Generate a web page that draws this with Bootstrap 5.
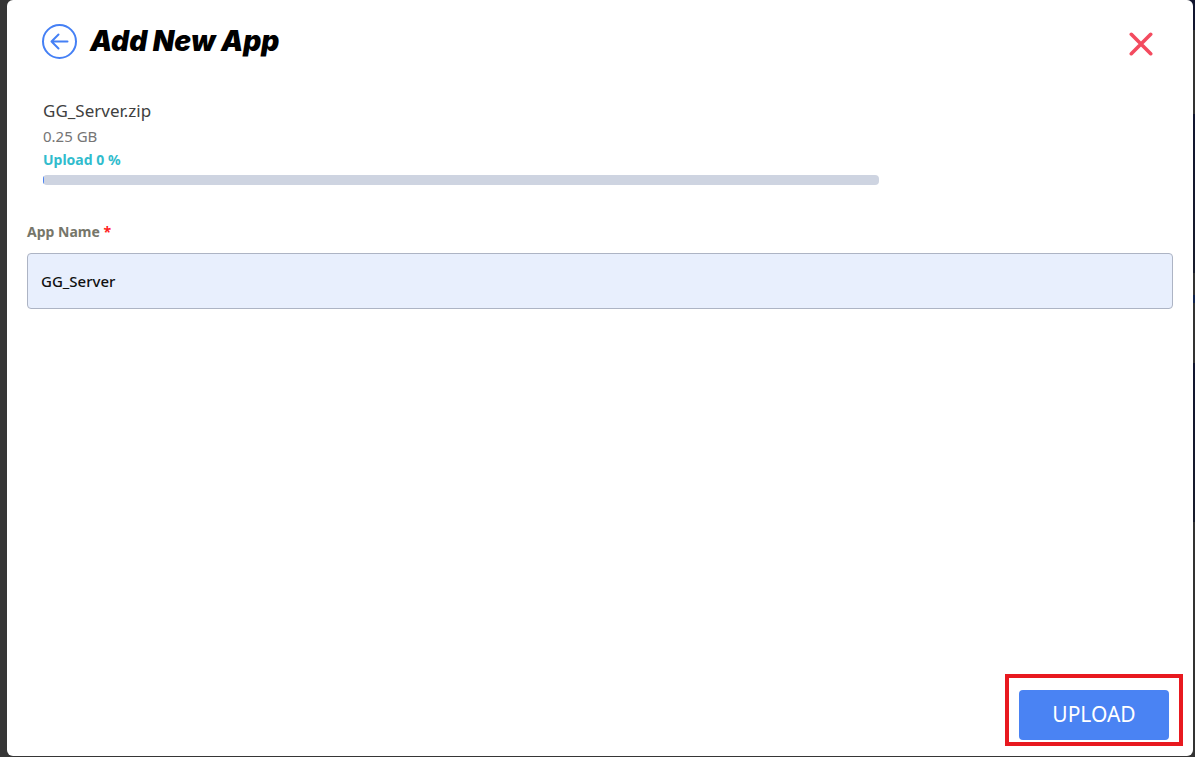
<!DOCTYPE html>
<html lang="en">
<head>
<meta charset="utf-8">
<meta name="viewport" content="width=device-width, initial-scale=1">
<title>Add New App</title>
<link rel="stylesheet" href="https://cdn.jsdelivr.net/npm/bootstrap@5.3.0/dist/css/bootstrap.min.css">
<style>
body { background: #363636; font-family: "Noto Sans", sans-serif; }
.page-shell {
  padding: 0 2px 1px 7px;
  background: linear-gradient(#11152f 4%, #333 4%, #333 15%, #11152f 15%, #171b2b 36%, #333 36%, #333 39%, #10234d 39%, #10234d 40%, #333 40%, #333 48%, #11152f 48%, #171b2b 69%, #333 69%) right / 6px 100% no-repeat;
}
.app-dialog { background: #fff; border-radius: 6px; }
.dialog-head { padding: 23px 40px 0 35px; }
.back-btn, .close-btn { line-height: 0; }
.close-btn { padding: 5px 0 0; }
.dialog-title { font: italic 900 28px/36px Inter, sans-serif; color: #000; margin-left: 13px; }
.upload-info { padding: 0 16px; margin: 39px 0 36px; }
.file-name { font-size: 17px; line-height: 26px; color: #404040; }
.file-size { font-size: 15px; line-height: 24px; color: #757575; }
.file-status { font-size: 14px; line-height: 24px; color: #31bccd; }
.upload-bar { height: 10px; border-radius: 4px; background: #ced4e1; width: 75%; margin-top: 3px; }
.upload-bar .progress-bar { background: #4a83f3; }
.name-label { font-size: 14px; line-height: 22px; color: #76766a; margin-bottom: 10px; }
.required-mark { color: #f22; }
.name-input { height: 56px; padding: 0 13px; font-size: 15px; font-weight: 500; color: #111; background: #e8effd; border-color: #adb4c4; border-radius: 4px; }
.upload-frame { border: 4px solid #e8191f; padding: 12px 10px 2px; margin: 0 10px 10px 0; }
.upload-btn { width: 150px; height: 50px; padding: 0; font-size: 21px; color: #fff; background: #4a83f3; border: 0; border-radius: 4px; }
</style>
</head>
<body>
<div class="page-shell d-flex min-vh-100">
  <main class="app-dialog flex-grow-1 d-flex flex-column">
    <header class="dialog-head d-flex align-items-center">
      <button type="button" class="btn back-btn border-0 p-0" aria-label="Back">
        <svg width="35" height="35" viewBox="0 0 35 35" fill="none" stroke="#4580f5" stroke-width="2" stroke-linecap="round" stroke-linejoin="round"><circle cx="17.5" cy="17.5" r="16.5"/><path d="M25.5 17.5H9.5M16.5 10.5l-7 7 7 7"/></svg>
      </button>
      <h1 class="dialog-title mb-0">Add New App</h1>
      <button type="button" class="btn close-btn border-0 ms-auto" aria-label="Close">
        <svg width="24" height="24" viewBox="0 0 24 24" fill="none" stroke="#f34b5f" stroke-width="3.6" stroke-linecap="round"><path d="M2.3 2.3l19.4 19.4M21.7 2.3L2.3 21.7"/></svg>
      </button>
    </header>
    <form class="flex-grow-1 d-flex flex-column">
      <div class="px-3 mx-1">
        <section class="upload-info">
          <div class="file-name">GG_Server.zip</div>
          <div class="file-size">0.25 GB</div>
          <div class="file-status"><strong>Upload 0 %</strong></div>
          <div class="progress upload-bar" role="progressbar" aria-label="Upload progress" aria-valuenow="0" aria-valuemin="0" aria-valuemax="100"><div class="progress-bar" style="width:0.1%"></div></div>
        </section>
        <label for="appName" class="name-label fw-bold d-block">App Name <span class="required-mark">*</span></label>
        <input id="appName" class="form-control name-input" type="text" value="GG_Server">
      </div>
      <div class="mt-auto d-flex justify-content-end">
        <div class="upload-frame"><button type="button" class="btn upload-btn">UPLOAD</button></div>
      </div>
    </form>
  </main>
</div>
<script src="https://cdn.jsdelivr.net/npm/bootstrap@5.3.0/dist/js/bootstrap.bundle.min.js"></script>
</body>
</html>
